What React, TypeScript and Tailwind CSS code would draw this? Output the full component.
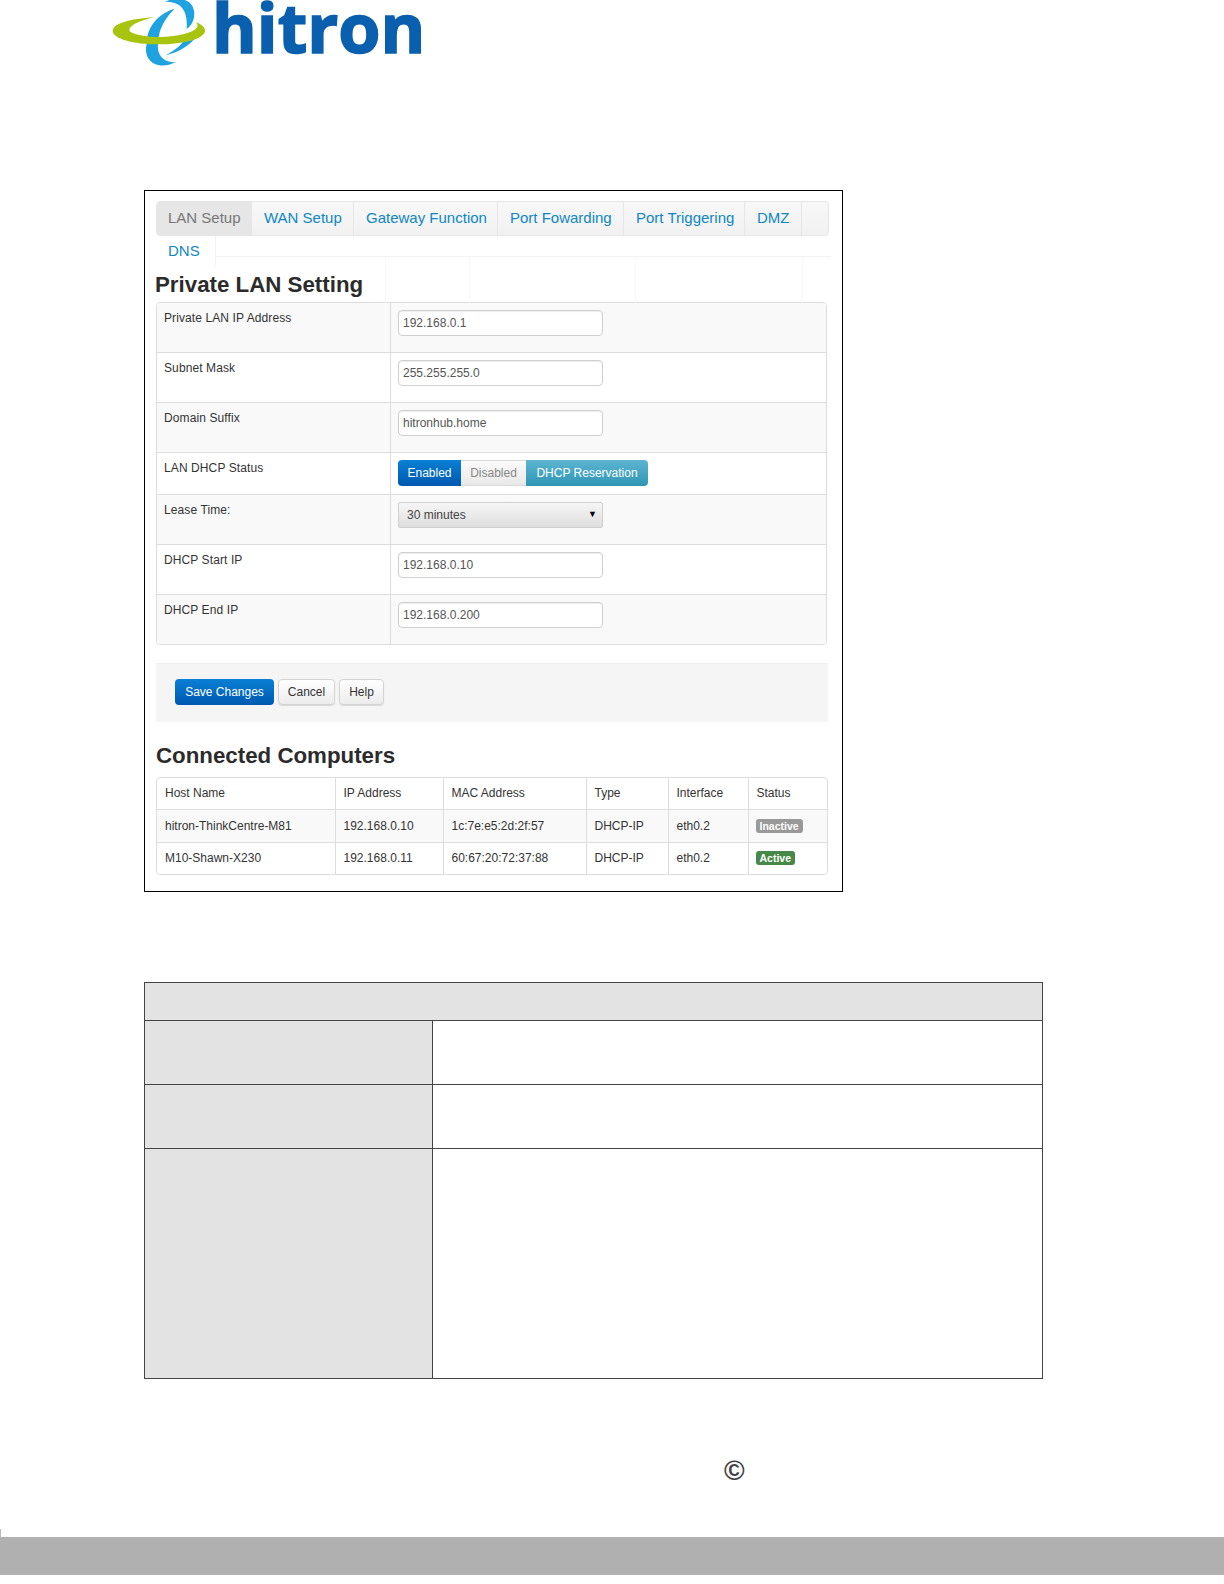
const tabs = [
  { label: 'LAN Setup', w: 'w-[95px]', active: true },
  { label: 'WAN Setup', w: 'w-[102px]' },
  { label: 'Gateway Function', w: 'w-[144px]' },
  { label: 'Port Fowarding', w: 'w-[126px]' },
  { label: 'Port Triggering', w: 'w-[121px]' },
  { label: 'DMZ', w: 'w-[57px]' },
];

const fields = [
  { label: 'Private LAN IP Address', value: '192.168.0.1' },
  { label: 'Subnet Mask', value: '255.255.255.0' },
  { label: 'Domain Suffix', value: 'hitronhub.home' },
  { label: 'LAN DHCP Status', kind: 'status' },
  { label: 'Lease Time:', kind: 'select' },
  { label: 'DHCP Start IP', value: '192.168.0.10' },
  { label: 'DHCP End IP', value: '192.168.0.200' },
];

const computers = [
  { host: 'hitron-ThinkCentre-M81', ip: '192.168.0.10', mac: '1c:7e:e5:2d:2f:57', type: 'DHCP-IP', iface: 'eth0.2', status: 'Inactive' },
  { host: 'M10-Shawn-X230', ip: '192.168.0.11', mac: '60:67:20:72:37:88', type: 'DHCP-IP', iface: 'eth0.2', status: 'Active' },
];

function Logo() {
  return (
    <svg width="360" height="90" viewBox="0 0 1080 270" className="ml-[90px] block">
      <path fill="#1fa3e0" d="M222 6 C255 -10 305 -8 312 32 C316 54 306 78 290 86 C292 60 288 30 268 16 C255 8 240 4 222 6 Z" />
      <path fill="#1fa3e0" d="M254 26 C212 38 178 72 172 112 L206 112 C210 80 230 50 254 26 Z" />
      <path fill="#1fa3e0" d="M170 132 C158 178 198 216 258 186 C222 190 200 165 204 132 Z" />
      <path fill="#1fa3e0" d="M226 166 C255 150 275 135 285 116 L322 106 C302 136 265 158 226 166 Z" />
      <path fill="#a8c40e" d="M192 52 C120 56 68 72 68 92 C68 116 130 133 205 133 C285 133 345 115 345 92 C345 82 335 73 318 67 C328 78 322 90 290 100 C255 110 215 113 185 110 C150 107 118 100 118 90 C118 76 150 62 192 52 Z" />
      <text x="366" y="160" textLength="640" lengthAdjust="spacingAndGlyphs" fontFamily="'Open Sans', sans-serif" fontWeight="700" fontSize="204" fill="#0a5fae" stroke="#0a5fae" strokeWidth="5">hitron</text>
    </svg>
  );
}

function LanField({ field }: { field: (typeof fields)[number] }) {
  if (field.kind === 'status') {
    return (
      <div className="flex h-[26px] text-[12px] leading-[26px]">
        <div className="w-[63px] rounded-l-[4px] bg-gradient-to-b from-[#0a80d4] to-[#0058b0] text-center text-white">Enabled</div>
        <div className="w-[65px] border-y border-[#d8d8d8] bg-gradient-to-b from-[#fbfbfb] to-[#e8e8e8] text-center leading-[24px] text-[#888]">Disabled</div>
        <div className="w-[122px] rounded-r-[4px] bg-gradient-to-b from-[#5bb5d2] to-[#2f96b4] text-center text-white">DHCP Reservation</div>
      </div>
    );
  }
  if (field.kind === 'select') {
    return (
      <div className="flex h-[26px] w-[205px] items-center justify-between rounded-[2px] border border-[#d0d0d0] bg-gradient-to-b from-[#f6f6f6] to-[#dedede] pl-[8px] pr-[5px] text-[12px] text-[#444]">
        <span>30 minutes</span>
        <span className="text-[9px] text-black">▼</span>
      </div>
    );
  }
  return (
    <input
      readOnly
      defaultValue={field.value}
      className="h-[26px] w-[205px] rounded-[4px] border border-[#cfcfcf] bg-white px-[4px] text-[12px] text-[#555] shadow-[inset_0_1px_1px_rgba(0,0,0,0.07)] outline-none"
    />
  );
}

export default function App() {
  return (
    <div className="flex h-[1584px] w-[1224px] flex-col bg-white font-['Liberation_Sans',Arial,sans-serif]">
      <div className="h-[190px]">
        <Logo />
      </div>

      {/* Screenshot frame */}
      <div className="relative ml-[144px] h-[702px] w-[699px] border border-black px-[11px] pt-[10px]">
        {/* leftover grid lines from the captured page */}
        <div className="absolute left-[240px] top-[67px] h-[45px] w-px bg-[#f8f8f8]" />
        <div className="absolute left-[324px] top-[67px] h-[45px] w-px bg-[#f9f9f9]" />
        <div className="absolute left-[490px] top-[67px] h-[45px] w-px bg-[#f8f8f8]" />
        <div className="absolute left-[657px] top-[67px] h-[45px] w-px bg-[#f8f8f8]" />

        <div className="flex h-[35px] w-[673px] rounded-[4px] border border-[#e6e6e6] bg-gradient-to-b from-[#f8f8f8] to-[#f1f1f1] text-[15px] leading-[32px]">
          {tabs.map((t) => (
            <div
              key={t.label}
              className={`${t.w} border-r border-[#e6e6e6] ${t.active ? 'rounded-l-[4px] bg-[#e6e6e6] pl-[11px] text-[#777]' : 'pl-[12px] text-[#0f87c4]'}`}
            >
              {t.label}
            </div>
          ))}
        </div>
        <div className="flex h-[29px] text-[15px] leading-[30px] text-[#0f87c4]">
          <div className="w-[60px] border-r border-[#f3f3f3] pl-[12px]">DNS</div>
          <div className="h-[21px] w-[617px] border-b border-[#f3f3f3]" />
        </div>
        <h2 className="relative -ml-px h-[37px] pt-[3px] text-[22.3px] font-bold leading-[34px] text-[#2b2b2b]">Private LAN Setting</h2>

        <div className="w-[671px] overflow-hidden rounded-[4px] border border-[#dddddd] text-[12px] text-[#333]">
          {fields.map((f, i) => (
            <div
              key={f.label}
              className={`flex ${f.kind === 'status' ? 'h-[42px]' : i === 0 ? 'h-[49px]' : 'h-[50px]'} ${i > 0 ? 'border-t border-[#dddddd]' : ''} ${i % 2 === 0 ? 'bg-[#f9f9f9]' : 'bg-white'}`}
            >
              <div className="w-[234px] border-r border-[#dddddd] pl-[7px] pt-[6px] leading-[18px] tracking-[0.1px]">{f.label}</div>
              <div className="pl-[7px] pt-[7px]">
                <LanField field={f} />
              </div>
            </div>
          ))}
        </div>

        <div className="mt-[18px] flex h-[59px] w-[672px] items-center gap-[4px] border-t border-[#eeeeee] bg-[#f5f5f5] pb-[3px] pl-[19px] text-[12px]">
          <button className="h-[26px] w-[99px] rounded-[4px] bg-gradient-to-b from-[#0a80d4] to-[#0058b0] text-white">Save Changes</button>
          <button className="h-[26px] w-[57px] rounded-[4px] border border-[#d4d4d4] bg-gradient-to-b from-white to-[#ececec] text-[#333] shadow-[0_1px_1px_rgba(0,0,0,0.12)]">Cancel</button>
          <button className="h-[26px] w-[45px] rounded-[4px] border border-[#d4d4d4] bg-gradient-to-b from-white to-[#ececec] text-[#333] shadow-[0_1px_1px_rgba(0,0,0,0.12)]">Help</button>
        </div>

        <h2 className="h-[55px] pt-[19px] text-[22.3px] font-bold leading-[30px] text-[#2b2b2b]">Connected Computers</h2>

        <div className="w-[672px] overflow-hidden rounded-[4px] border border-[#dddddd] text-[12px] text-[#333]">
          <table className="w-full table-fixed">
            <colgroup>
              <col className="w-[178px]" />
              <col className="w-[108px]" />
              <col className="w-[143px]" />
              <col className="w-[82px]" />
              <col className="w-[80px]" />
              <col />
            </colgroup>
            <thead>
              <tr className="h-[31px] text-left">
                {['Host Name', 'IP Address', 'MAC Address', 'Type', 'Interface', 'Status'].map((h, i) => (
                  <th key={h} className={`pl-[8px] font-normal ${i > 0 ? 'border-l border-[#dddddd]' : ''}`}>{h}</th>
                ))}
              </tr>
            </thead>
            <tbody>
              {computers.map((c, i) => (
                <tr key={c.host} className={`${i === 0 ? 'h-[33px]' : 'h-[32px]'} border-t border-[#dddddd] ${i === 0 ? 'bg-[#f9f9f9]' : 'bg-white'}`}>
                  <td className="pl-[8px]">{c.host}</td>
                  <td className="border-l border-[#dddddd] pl-[8px]">{c.ip}</td>
                  <td className="border-l border-[#dddddd] pl-[8px]">{c.mac}</td>
                  <td className="border-l border-[#dddddd] pl-[8px]">{c.type}</td>
                  <td className="border-l border-[#dddddd] pl-[8px]">{c.iface}</td>
                  <td className="border-l border-[#dddddd] pl-[7px]">
                    <span className={`inline-block h-[14px] rounded-[3px] px-[4px] text-[10.5px] font-bold leading-[14px] text-white ${c.status === 'Active' ? 'bg-[#468847]' : 'bg-[#999999]'}`}>
                      {c.status}
                    </span>
                  </td>
                </tr>
              ))}
            </tbody>
          </table>
        </div>
      </div>

      {/* Empty description table */}
      <div className="ml-[144px] mt-[90px] w-[899px] border border-[#444444]">
        <div className="h-[37px] bg-[#e3e3e3]" />
        <div className="flex h-[64px] border-t border-[#444444]">
          <div className="w-[288px] border-r border-[#444444] bg-[#e3e3e3]" />
        </div>
        <div className="flex h-[64px] border-t border-[#444444]">
          <div className="w-[288px] border-r border-[#444444] bg-[#e3e3e3]" />
        </div>
        <div className="flex h-[230px] border-t border-[#444444]">
          <div className="w-[288px] border-r border-[#444444] bg-[#e3e3e3]" />
        </div>
      </div>

      <div className="mt-[77px] h-[30px] pl-[724px] text-[28px] font-bold leading-[30px] text-[#444]">©</div>

      <div className="mt-auto mb-[9px]">
        <div className="h-[8px] w-px bg-[#bbbbbb]" />
        <div className="h-[38px] bg-[#b0b0b0]" />
      </div>
    </div>
  );
}
